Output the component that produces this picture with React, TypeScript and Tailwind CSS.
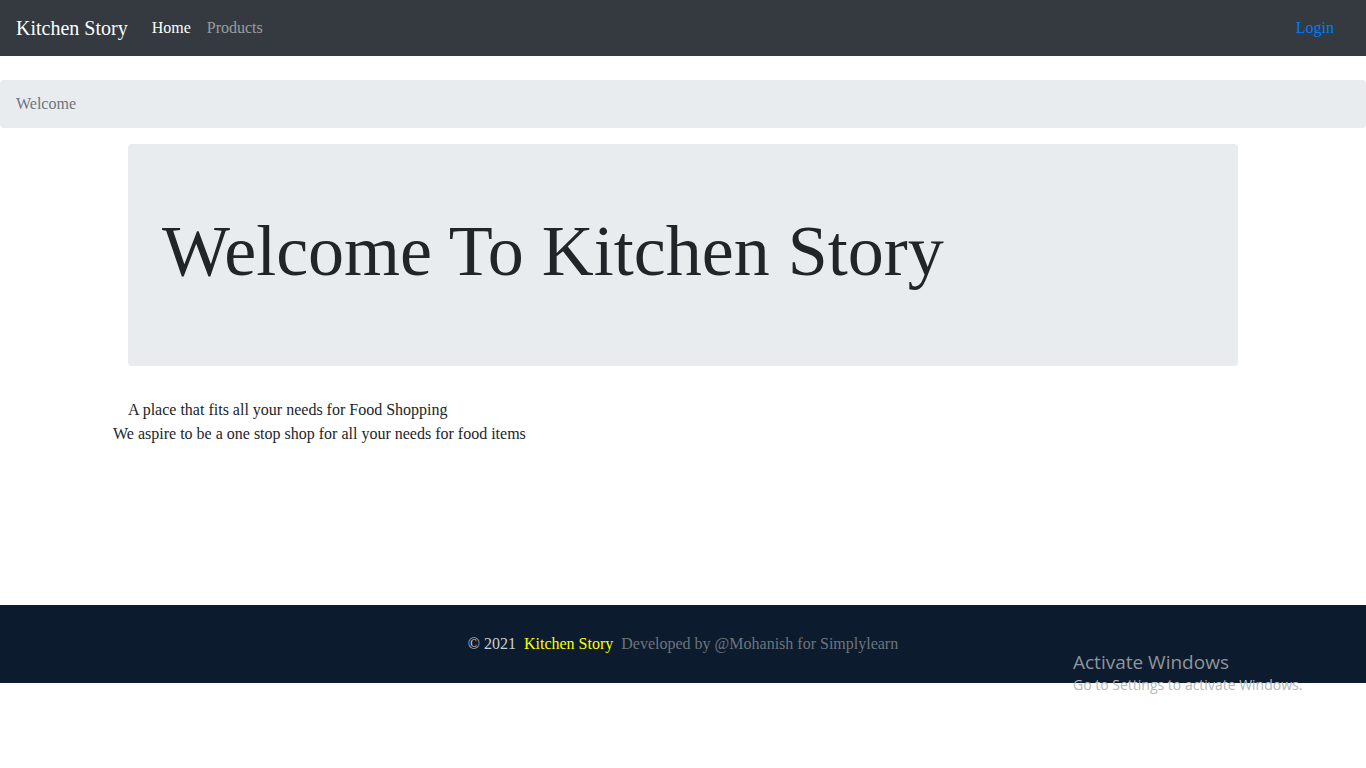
export default function App() {
  return (
    <div className="relative min-h-[768px] bg-white font-['Liberation_Serif',serif] text-base text-[#212529]">
      {/* Navbar */}
      <nav className="flex h-14 items-center bg-[#343a40] px-4">
        <span className="mr-4 text-xl text-white">Kitchen Story</span>
        <div className="flex items-center">
          <a className="px-2 text-white">Home</a>
          <a className="px-2 text-white/50">Products</a>
        </div>
        <a className="ml-auto pr-4 text-[#007bff]">Login</a>
      </nav>

      {/* Breadcrumb */}
      <div className="mt-6 rounded bg-[#e9ecef] px-4 py-3 text-[#6c757d]">Welcome</div>

      <div className="mx-auto mt-4 w-[1140px]">
        <div className="mx-[15px] rounded bg-[#e9ecef] px-8 py-16">
          <h1 className="mb-2 ml-0.5 text-[72px] font-light leading-[1.2]">Welcome To Kitchen Story</h1>
        </div>
        <p className="mt-8 px-[15px] leading-6">A place that fits all your needs for Food Shopping</p>
        <p className="leading-6">We aspire to be a one stop shop for all your needs for food items</p>
      </div>

      {/* Footer */}
      <footer className="mt-[159px] flex h-[78px] items-center justify-center bg-[#0c1c2e]">
        <span className="text-[#ccd0d5]">© 2021</span>
        <span className="ml-2 text-[#ffff00]">Kitchen Story</span>
        <span className="ml-2 text-[#6c757d]">Developed by @Mohanish for Simplylearn</span>
      </footer>

      {/* Windows watermark */}
      <div className="pointer-events-none absolute left-[1073px] top-[650px] font-['Open_Sans',sans-serif] text-[#8f949a]">
        <div className="text-[19px] leading-6">Activate Windows</div>
        <div className="mt-px text-[14px] leading-5 text-[#b4b8bc]">Go to Settings to activate Windows.</div>
      </div>
    </div>
  );
}
